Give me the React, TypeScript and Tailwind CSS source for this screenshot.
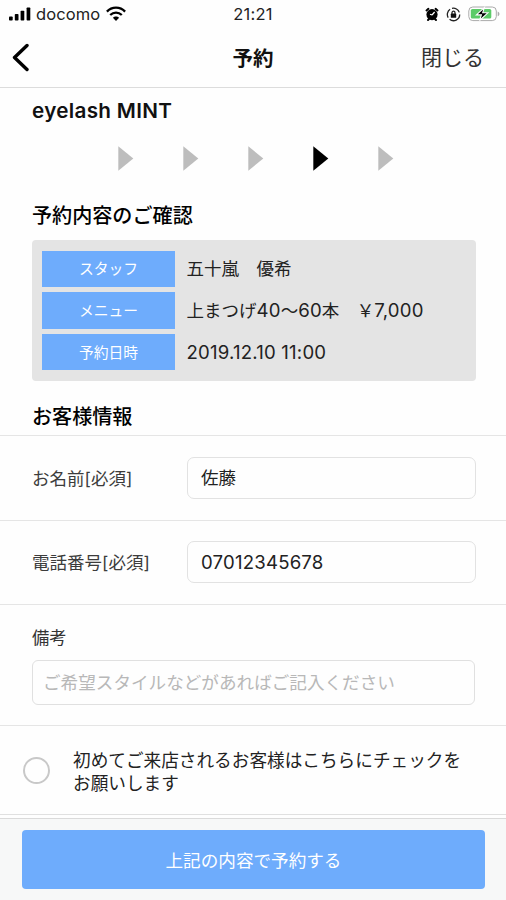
import type { ReactNode } from "react";

const steps = [
  { id: 1, active: false },
  { id: 2, active: false },
  { id: 3, active: false },
  { id: 4, active: true },
  { id: 5, active: false },
];

function Digits({ children }: { children: ReactNode }) {
  return <span className="text-[18.6px] leading-none tracking-[0.2px]">{children}</span>;
}

const details = [
  { label: "スタッフ", value: "五十嵐　優希" },
  {
    label: "メニュー",
    value: (
      <>
        上まつげ<Digits>40</Digits>〜<Digits>60</Digits>本　￥<Digits>7,000</Digits>
      </>
    ),
  },
  { label: "予約日時", value: <Digits>2019.12.10 11:00</Digits> },
];

function StatusBar() {
  return (
    <div className="grid h-7 grid-cols-3 items-center text-[16.5px] leading-7 text-[#222]">
      <div className="flex items-center pl-[9px]">
        <svg width="22" height="14" viewBox="0 0 22 14" className="fill-black">
          <rect x="0" y="9.5" width="3.7" height="4" rx="0.8" />
          <rect x="5.8" y="7" width="3.7" height="6.5" rx="0.8" />
          <rect x="11.6" y="3.8" width="3.7" height="9.7" rx="0.8" />
          <rect x="17.6" y="0.5" width="3.7" height="13" rx="0.8" />
        </svg>
        <span className="ml-[5px] w-[63.5px] whitespace-nowrap tracking-[0.1px]">docomo</span>
        <svg width="20" height="16" viewBox="0 0 20 16" className="ml-[6px]" fill="none" stroke="#000" strokeWidth="2.3">
          <path d="M0.9 5.6C5.8 0.4 14.2 0.4 19.1 5.6" />
          <path d="M4.2 9C7.5 5.8 12.5 5.8 15.8 9" />
          <path d="M6.9 11.8C8.6 10 11.4 10 13.1 11.8L10 15Z" fill="#000" stroke="none" />
        </svg>
      </div>
      <div className="text-center tracking-[0.2px]">21:21</div>
      <div className="flex items-center justify-end pr-[6px]">
        <svg width="14" height="15" viewBox="0 0 14 15">
          <circle cx="7" cy="7.6" r="5.6" />
          <path d="M1.5 3.4L3.4 1.8M12.5 3.4L10.6 1.8M3 13L4 12M11 13L10 12" stroke="#000" strokeWidth="2" strokeLinecap="round" />
          <path d="M7 8L9.6 5M7 8L5 7.2" stroke="#fff" strokeWidth="1.2" fill="none" />
        </svg>
        <svg width="15" height="15" viewBox="0 0 15 15" className="ml-[7px]" fill="none" stroke="#222" strokeWidth="1.3">
          <path d="M2.2 10.6A6.2 6.2 0 0 1 4.1 2.3M6 1.4A6.2 6.2 0 0 1 13.3 5.4M13.7 7.5A6.2 6.2 0 0 1 3.6 12.3" />
          <rect x="4.8" y="6.6" width="5.4" height="4.2" rx="0.6" fill="#111" stroke="none" />
          <path d="M6 7V5.7a1.5 1.5 0 0 1 3 0V7" />
        </svg>
        <svg width="32" height="16" viewBox="0 0 32 16" className="ml-[7px]">
          <rect x="0.8" y="1" width="27.5" height="13.6" rx="4" fill="#fff" stroke="#aaa" />
          <rect x="2.8" y="3" width="20.5" height="9.6" rx="1.6" fill="#5ccb68" />
          <path d="M29.7 5.5c2.3.8 2.3 4 0 4.8Z" fill="#aaa" />
          <path d="M16.3 1.6L8.4 8.9h5l-1.9 5.6 8.4-7.7h-5.2Z" fill="#000" stroke="#fff" strokeWidth="1.1" />
        </svg>
      </div>
    </div>
  );
}

function Header() {
  return (
    <header className="grid h-[60px] grid-cols-3 items-center border-b-[1.5px] border-[#dcdcdc]">
      <svg width="18" height="30" viewBox="0 0 18 30" className="ml-[11px]" fill="none" stroke="#000" strokeWidth="3.4" strokeLinecap="round">
        <path d="M16 2.5L3.5 14.5L16 26.5" strokeLinejoin="round" />
      </svg>
      <h1 className="pt-[3px] text-center text-[20.5px] font-bold">予約</h1>
      <button className="pr-[22px] text-right text-[21px] text-[#333]">閉じる</button>
    </header>
  );
}

function Field({ label, children }: { label: string; children: ReactNode }) {
  return (
    <div className="flex h-[84.5px] items-center border-b-[1.5px] border-[#e5e5e5] pl-8">
      <label className="w-[155px] pt-[2px] text-[17.5px] whitespace-nowrap text-[#3c3c3c]">{label}</label>
      <div className="flex h-[42px] w-[289px] items-center rounded-[7px] border border-[#e2e2e2] pl-[13px] text-[17.5px] text-[#222]">
        {children}
      </div>
    </div>
  );
}

function SectionTitle({ children }: { children: ReactNode }) {
  return <h2 className="pl-8 text-[20.1px] leading-[30px] font-medium text-black">{children}</h2>;
}

export default function App() {
  return (
    <div className="flex h-[900px] w-[506px] flex-col overflow-hidden bg-[#fefefe] font-['Inter','Noto_Sans_CJK_JP',sans-serif] text-[#111]">
      <StatusBar />
      <Header />
      <main className="flex-1">
        <div className="h-[46px] pl-8 text-[20.7px] leading-[46px] font-semibold tracking-[0.3px]">eyelash MINT</div>
        <div className="flex h-[67px] gap-[49px] pt-3 pl-[118px]">
          {steps.map((step) => (
            <svg key={step.id} width="16" height="25" viewBox="0 0 16 25" className={step.active ? "fill-black" : "fill-[#bdbdbd]"}>
              <path d="M0.3 0.3L15.3 12.5L0.3 24.7Z" />
            </svg>
          ))}
        </div>
        <SectionTitle>予約内容のご確認</SectionTitle>
        <div className="mt-[9px] ml-8 flex h-[141px] w-[443.5px] flex-col gap-[5.7px] rounded-[4px] bg-[#e4e4e4] pt-[10.5px] pl-[10px]">
          {details.map((item) => (
            <div key={item.label} className="flex h-[36.2px] items-center">
              <div className="flex h-full w-[133px] items-center justify-center bg-[#6eacfc] pt-px text-[14.8px] text-white">{item.label}</div>
              <div className="ml-[11.5px] pt-[2px] text-[17.5px] whitespace-nowrap text-[#222]">{item.value}</div>
            </div>
          ))}
        </div>
        <div className="h-[55px] border-b-[1.5px] border-[#e5e5e5] pt-[21px]">
          <SectionTitle>お客様情報</SectionTitle>
        </div>
        <Field label="お名前[必須]">佐藤</Field>
        <Field label="電話番号[必須]">
          <Digits>07012345678</Digits>
        </Field>
        <div className="h-[121px] border-b-[1.5px] border-[#e5e5e5] px-8 pt-5">
          <div className="text-[17.3px] leading-[26px] text-[#333]">備考</div>
          <div className="mt-[9px] flex h-[45px] w-[443px] items-center rounded-[6px] border border-[#e0e0e0] pt-px pl-[10px] text-[17.6px] whitespace-nowrap text-[#b8b8b8]">
            ご希望スタイルなどがあればご記入ください
          </div>
        </div>
        <div className="flex h-[89px] items-center border-b-[1.5px] border-[#e0e0e0] pl-[22.5px]">
          <div className="size-[27px] rounded-full border-2 border-[#c8c8c8]" />
          <p className="ml-[23.5px] pt-[3px] text-[17.65px] leading-[23px] whitespace-nowrap text-[#222]">
            初めてご来店されるお客様はこちらにチェックを
            <br />
            お願いします
          </p>
        </div>
      </main>
      <footer className="h-[82px] border-t-[1.5px] border-[#dadada] bg-[#f7f8f8] pt-[10.5px] pl-[22px]">
        <button className="h-[59.5px] w-[463px] rounded-[4px] bg-[#6eacfc] pt-[3px] text-[17.6px] text-white">上記の内容で予約する</button>
      </footer>
    </div>
  );
}
